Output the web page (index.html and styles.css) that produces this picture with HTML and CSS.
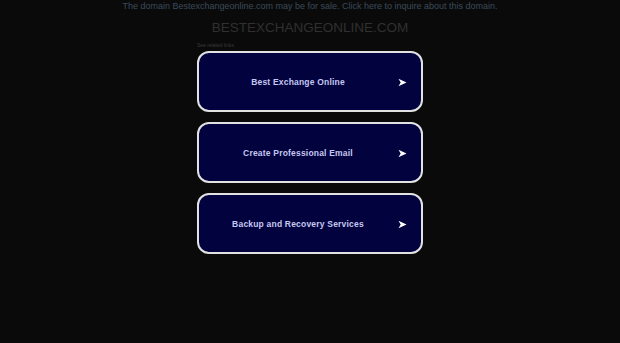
FILE: index.html
```html
<!DOCTYPE html>
<html>
<head>
<meta charset="utf-8">
<link rel="stylesheet" href="styles.css">
</head>
<body>
<div class="page">
  <div class="sale">The domain Bestexchangeonline.com may be for sale. Click here to inquire about this domain.</div>
  <h1 class="title">BESTEXCHANGEONLINE.COM</h1>
  <div class="links">
    <div class="related">See related links</div>
    <a class="btn" href="#"><span class="label">Best Exchange Online</span><svg class="arrow" viewBox="0 0 10 10"><path d="M0.5 0.8 L9.5 5 L0.5 9.2 L3 5 Z" fill="#fff"/></svg></a>
    <a class="btn" href="#"><span class="label">Create Professional Email</span><svg class="arrow" viewBox="0 0 10 10"><path d="M0.5 0.8 L9.5 5 L0.5 9.2 L3 5 Z" fill="#fff"/></svg></a>
    <a class="btn" href="#"><span class="label">Backup and Recovery Services</span><svg class="arrow" viewBox="0 0 10 10"><path d="M0.5 0.8 L9.5 5 L0.5 9.2 L3 5 Z" fill="#fff"/></svg></a>
  </div>
</div>
</body>
</html>
```
FILE: styles.css
```css
html, body {
  margin: 0;
  padding: 0;
  background: #0a0a0a;
  height: 100%;
}
.page {
  display: flex;
  flex-direction: column;
  align-items: center;
  font-family: "Liberation Sans", Arial, sans-serif;
}
.sale {
  margin-top: 0;
  font-size: 9px;
  line-height: 12px;
  letter-spacing: 0;
  color: #3a4a5a;
  white-space: nowrap;
}
.title {
  margin: 8px 0 0;
  font-weight: normal;
  font-size: 13.5px;
  line-height: 16px;
  letter-spacing: 0;
  color: #303030;
}
.links {
  width: 226px;
  margin-top: 6px;
  display: flex;
  flex-direction: column;
  gap: 10px;
}
.related {
  font-size: 5px;
  line-height: 6px;
  color: #3a3a3a;
  margin-bottom: -7px;
}
.btn {
  box-sizing: border-box;
  height: 61px;
  padding-right: 24px;
  border: 2px solid #e2e2e2;
  border-radius: 12px;
  background: #02023f;
  display: flex;
  align-items: center;
  justify-content: center;
  position: relative;
  text-decoration: none;
}
.label {
  font-weight: bold;
  font-size: 8.5px;
  letter-spacing: 0.2px;
  color: #c6c8f0;
}
.arrow {
  position: absolute;
  right: 14px;
  top: 50%;
  width: 9px;
  height: 9px;
  margin-top: -4px;
}
```
